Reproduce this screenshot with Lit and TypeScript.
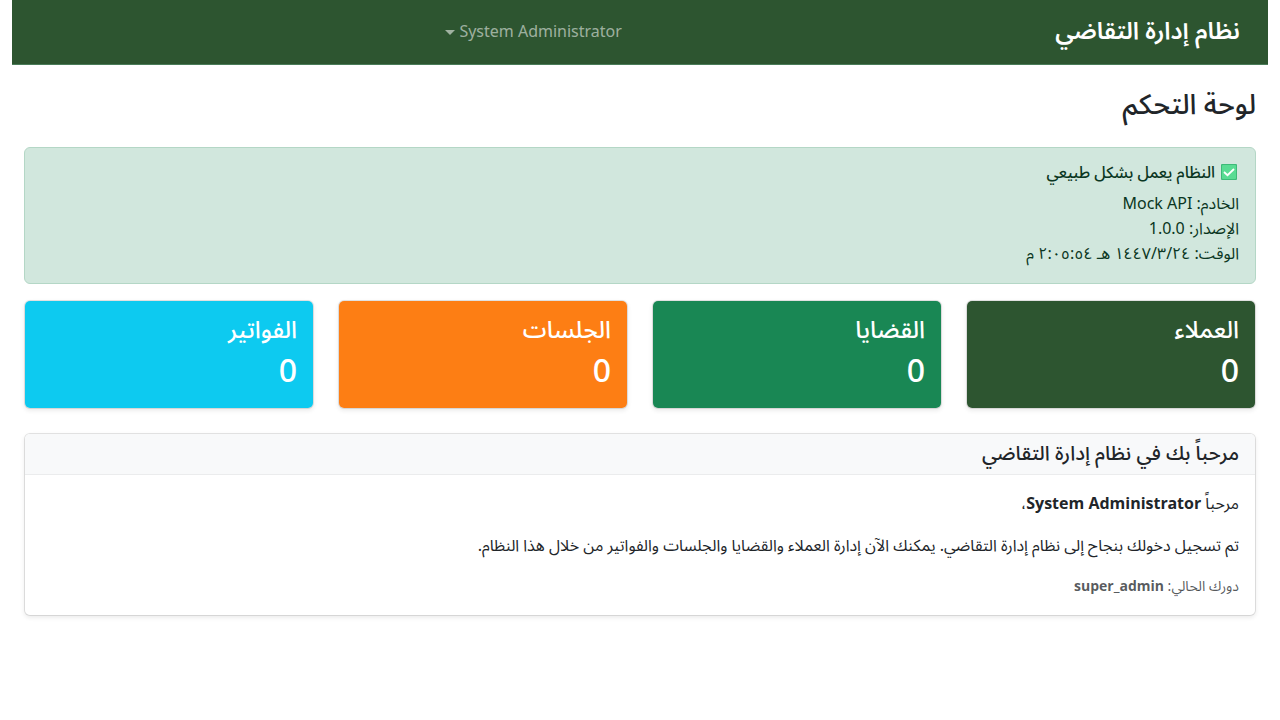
import { LitElement, html, css } from "lit";
import { customElement } from "lit/decorators.js";

interface Stat {
  title: string;
  value: number;
  tone: string;
}

const STATS: Stat[] = [
  { title: "العملاء", value: 0, tone: "primary" },
  { title: "القضايا", value: 0, tone: "success" },
  { title: "الجلسات", value: 0, tone: "warning" },
  { title: "الفواتير", value: 0, tone: "info" },
];

@customElement("app-root")
export class AppRoot extends LitElement {
  static styles = css`
    :host {
      display: block;
      padding: 0 12px;
      font-family: "Noto Sans Arabic", "Noto Sans", sans-serif;
      font-size: 16px;
      line-height: 26px;
      color: #212529;
    }
    * {
      box-sizing: border-box;
    }
    h1, h2, h3, p {
      margin: 0;
      font-weight: 500;
    }
    .navbar {
      display: flex;
      align-items: center;
      justify-content: space-between;
      padding: 8px 28px 8px 0;
      background: #2d5530;
      border-bottom: 1px solid #4a7c59;
    }
    .brand {
      padding: 4px 0;
      font-size: 24px;
      line-height: 40px;
      font-weight: 600;
      color: #fff;
      text-decoration: none;
    }
    .user {
      display: flex;
      align-items: center;
      gap: 4px;
      padding: 8px;
      border: 0;
      background: none;
      font: inherit;
      color: rgba(255, 255, 255, 0.55);
    }
    .caret {
      border: 5px solid transparent;
      border-top-color: currentColor;
      border-bottom: 0;
    }
    .content {
      padding: 24px 12px;
    }
    .title {
      margin-bottom: 24px;
      font-size: 28px;
      line-height: 34px;
    }
    .alert {
      margin-bottom: 16px;
      padding: 16px;
      border: 1px solid #b4d7c6;
      border-radius: 6px;
      background: #d1e7dd;
      color: #0a3622;
    }
    .alert-title {
      display: flex;
      align-items: center;
      gap: 6px;
      margin-bottom: 10px;
      font-size: 16px;
      line-height: 18px;
    }
    .check {
      width: 18px;
      height: 18px;
    }
    .line {
      font-weight: 400;
      line-height: 25px;
    }
    .stats {
      display: grid;
      grid-template-columns: repeat(4, 1fr);
      gap: 24px;
      margin-bottom: 24px;
    }
    .card {
      border: 1px solid rgba(0, 0, 0, 0.1);
      border-radius: 6px;
      background: #fff;
      background-clip: padding-box;
      box-shadow: 0 2px 4px rgba(0, 0, 0, 0.075);
    }
    .stat {
      padding: 16px;
      color: #fff;
    }
    .primary { background-color: #2d5530; }
    .success { background-color: #198754; }
    .warning { background-color: #fd7e14; }
    .info { background-color: #0dcaf0; }
    .stat-title {
      margin-bottom: 8px;
      font-size: 24px;
      line-height: 27px;
      font-weight: 500;
    }
    .stat-value {
      font-size: 32px;
      line-height: 40px;
      font-weight: 500;
    }
    .card-head {
      padding: 8px 16px;
      border-bottom: 1px solid rgba(0, 0, 0, 0.05);
      border-radius: 5px 5px 0 0;
      background: #f8f9fa;
    }
    .card-title {
      font-size: 20px;
      line-height: 24px;
    }
    .card-body {
      display: flex;
      flex-direction: column;
      gap: 16px;
      padding: 16px;
    }
    .text {
      font-weight: 400;
    }
    .muted {
      font-size: 14px;
      line-height: 24px;
      color: rgba(33, 37, 41, 0.75);
    }
    b {
      font-weight: 700;
    }
  `;

  render() {
    return html`
      <div dir="rtl">
        <nav class="navbar">
          <a class="brand" href="#">نظام إدارة التقاضي</a>
          <button class="user" type="button" aria-haspopup="true">
            System Administrator<span class="caret"></span>
          </button>
          <span></span>
        </nav>
        <main class="content">
          <h1 class="title">لوحة التحكم</h1>
          <section class="alert" role="status">
            <h2 class="alert-title">
              <svg class="check" viewBox="0 0 18 18" aria-hidden="true">
                <rect x="0" y="0" width="16" height="16" rx="1" fill="#3dba78" />
                <rect x="1" y="1" width="14" height="14" rx="1" fill="#59dc93" />
                <path d="M3 8l3.500 3.200L13 5" fill="none" stroke="#fff" stroke-width="1.800" />
              </svg>
              النظام يعمل بشكل طبيعي
            </h2>
            <p class="line">الخادم: Mock API</p>
            <p class="line">الإصدار: 1.0.0</p>
            <p class="line">الوقت: ٢٤‏/٣‏/١٤٤٧ هـ ٢:٠٥:٥٤ م</p>
          </section>
          <section class="stats">
            ${STATS.map(
              (s) => html`<div class="card stat ${s.tone}">
                <h2 class="stat-title">${s.title}</h2>
                <p class="stat-value">${s.value}</p>
              </div>`
            )}
          </section>
          <section class="card">
            <header class="card-head">
              <h2 class="card-title">مرحباً بك في نظام إدارة التقاضي</h2>
            </header>
            <div class="card-body">
              <p class="text">مرحباً <b>System Administrator</b>،</p>
              <p class="text">
                تم تسجيل دخولك بنجاح إلى نظام إدارة التقاضي. يمكنك الآن إدارة العملاء والقضايا والجلسات والفواتير من خلال هذا النظام.
              </p>
              <p class="text muted">دورك الحالي: <b>super_admin</b></p>
            </div>
          </section>
        </main>
      </div>
    `;
  }
}
